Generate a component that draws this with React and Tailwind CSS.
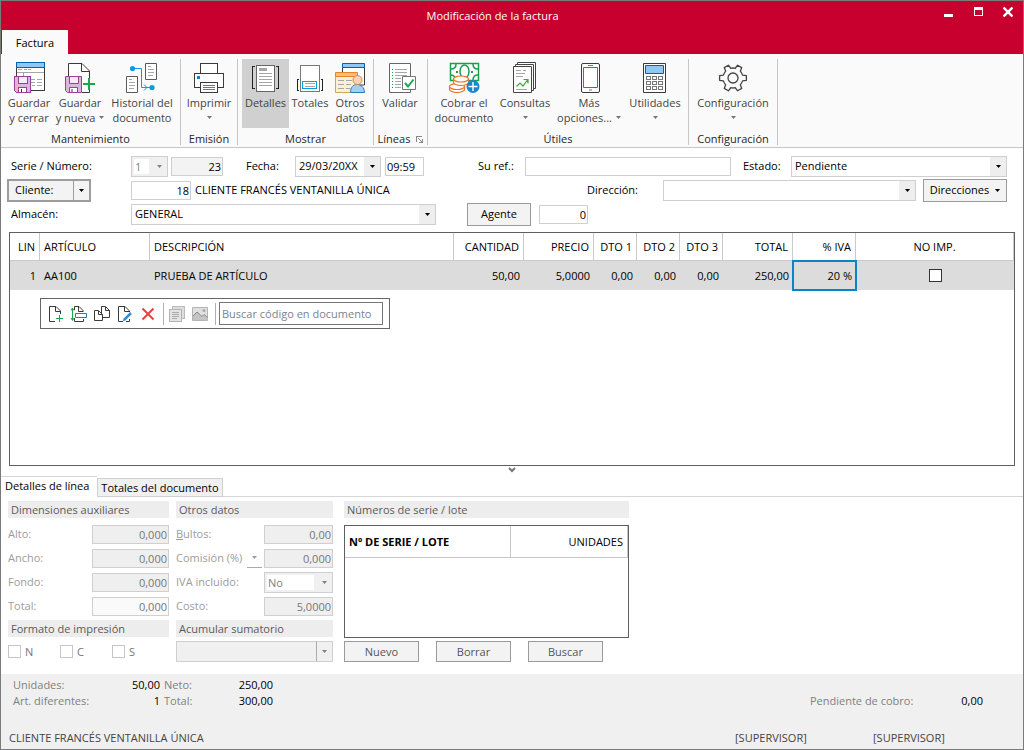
import React, { useState } from 'react';
import { clsx } from 'clsx';

const DARK = '#3a3a38';
const GRAY = '#a6a6a6';
const BLUE = '#0f84cc';

function Caret({ className }) {
  return (
    <svg width="5" height="3" viewBox="0 0 5 3" className={clsx('shrink-0', className)} aria-hidden="true">
      <path d="M0 0h5L2.5 3z" fill="currentColor" />
    </svg>
  );
}

function Icon({ children, size = 32, crisp = true }) {
  return (
    <svg width={size} height={size} viewBox={`0 0 ${size} ${size}`} fill="none" shapeRendering={crisp ? 'crispEdges' : 'auto'} className="shrink-0" aria-hidden="true">
      {children}
    </svg>
  );
}

/* ---------- ribbon icons ---------- */

function Floppy() {
  return (
    <g stroke="#9b3f9b">
      <path d="M1.5 15.5h16v16h-14l-2-2z" fill="#dcb4dc" />
      <path d="M5.5 15.5h9v7h-9z" fill="#f6eaf6" />
      <path d="M5.5 26.5h8v5h-8z" fill="#fff" />
      <path d="M8 28v3" stroke={DARK} />
    </g>
  );
}

function SaveCloseIcon() {
  return (
    <Icon>
      <path d="M3.5 6.5h28v23h-28z" fill="#fff" stroke={DARK} />
      <path d="M3.5 1.5h28v5h-28z" fill="#92c7ef" stroke="#0063b1" />
      <path d="M5 8.5h4M11 8.5h3M15 8.5h3M4 11.5h27M10.5 11v4M17 18.5h5M24 18.5h5M17 21.5h5M24 21.5h5M19 24.5h3M24 24.5h5" stroke={GRAY} />
      <Floppy />
    </Icon>
  );
}

function SaveNewIcon() {
  return (
    <Icon crisp={false}>
      <path d="M4.5 31V2.5H18l8 8v20.5z" fill="#fff" />
      <path d="M4.5 15V2.5H18l7.5 7.5v7M18 31.5h7.5V28M17.5 3v7.5h8" stroke={DARK} />
      <path d="M19 23h12M25 17v12" stroke="#17a84b" strokeWidth="2" />
      <Floppy />
    </Icon>
  );
}

function HistoryIcon() {
  return (
    <Icon crisp={false}>
      <path d="M19.5 2.5h11v16h-11zM.5 15.5h11v16H.5z" fill="#fff" stroke="#5a5a5a" />
      <path d="M22 5.5h3M22 8.5h6M22 11.5h6M22 14.5h5M3 18.5h3M3 21.5h6M3 24.5h6M3 27.5h5" stroke={GRAY} />
      <path d="M7 7.5h8.5v19H24M18 23.5l3 3-3 3" stroke="#0a9be0" />
      <circle cx="6.5" cy="7.5" r="2.6" fill="#0a9be0" />
      <circle cx="26" cy="26.5" r="2.6" fill="#0a9be0" />
    </Icon>
  );
}

function PrinterIcon() {
  return (
    <Icon>
      <path d="M1.5 12.5h29v14h-29z" fill="#fff" stroke={DARK} />
      <path d="M7.5 2.5h17v10h-17zM7.5 21.5h17v10h-17z" fill="#fff" stroke={DARK} />
      <path d="M4 15h3v3H4z" fill={BLUE} />
      <path d="M10 24.5h12M10 26.5h12M10 28.5h12" stroke="#777" />
    </Icon>
  );
}

function DetailsIcon() {
  return (
    <Icon>
      <path d="M6.5 4.5h18v26h-18z" fill="#fff" stroke="#666" />
      <path d="M9 7h8v3H9z" fill={GRAY} />
      <path d="M9 12.5h13M9 15.5h13M9 18.5h13M9 21.5h13M9 24.5h13" stroke={GRAY} />
      <path d="M5 5.5H2.5v22H5M26 5.5h2.5v22H26" stroke="#222" />
    </Icon>
  );
}

function TotalsIcon() {
  return (
    <Icon>
      <path d="M6.5 4.5h19v26h-19z" fill="#fff" stroke="#777" />
      <path d="M8.5 20.5h14v7h-14z" fill="#fff" stroke="#0a9be0" />
      <path d="M11 22.5h10M11 25.5h10" stroke={GRAY} />
      <path d="M5 18.5H3.5v11H5M27 18.5h1.5v11H27" stroke="#222" />
    </Icon>
  );
}

function OtherDataIcon() {
  return (
    <Icon crisp={false}>
      <path d="M8.5 6.5h22V24h-22z" fill="#fff" stroke={DARK} />
      <path d="M8.5 2.5h22v4h-22z" fill="#92c7ef" stroke="#0063b1" />
      <path d="M1.5 15.5h22v16h-22z" fill="#fbf0cf" stroke="#c9a85a" />
      <path d="M1.5 11.5h22v4h-22z" fill="#fdbb7c" stroke="#e8832a" />
      <path d="M4 19.5h6M12 19.5h6M4 23.5h6M12 23.5h5M4 27.5h6M12 27.5h4" stroke={GRAY} />
      <path d="M16.5 31.5c0-5 2.5-8 6.5-8s7.5 3 7.5 8z" fill="#a5cff0" stroke="#2b7ab8" />
      <circle cx="23.5" cy="19" r="4.5" fill="#f9d3b3" stroke="#dd8a4c" />
    </Icon>
  );
}

function ValidateIcon() {
  return (
    <Icon crisp={false}>
      <path d="M5.5 2.5h21v29h-21z" fill="#fff" stroke="#666" />
      <path d="M11 8.5h12M11 11.5h12M11 14.5h12M11 17.5h6M11 20.5h6M11 23.5h6M11 26.5h6" stroke={GRAY} />
      <path d="M8.5 8v1M8.5 14v1M8.5 20v1M8.5 26v1" stroke="#e03030" />
      <path d="M8.5 11v1M8.5 17v1M8.5 23v1" stroke="#17a84b" />
      <path d="M18.5 15.5h13v13h-13z" fill="#fff" stroke="#777" />
      <path d="M21 22l3 3.5 5.5-7" stroke="#17a84b" strokeWidth="2" />
    </Icon>
  );
}

function CashIcon() {
  return (
    <Icon crisp={false}>
      <path d="M2.5 2.5h28v17h-28z" fill="#fff" stroke="#1c9e4e" strokeWidth="1.5" />
      <path d="M3 8c3 0 5-2 5-5M30 8c-3 0-5-2-5-5M30 14c-3 0-5 2-5 5M3 14c2 0 3 1 4 2" stroke="#1c9e4e" strokeWidth="1.5" />
      <ellipse cx="16.5" cy="10.5" rx="4.5" ry="6.5" stroke="#1c9e4e" strokeWidth="1.5" />
      <path d="M8 11h2M23 11h2" stroke="#1c9e4e" strokeWidth="2" />
      <g fill="#fff" stroke="#ea7420" strokeWidth="1.2">
        <path d="M1.5 25.5v3c0 1.5 3.5 3 7.5 3s7.5-1.5 7.5-3v-3z" />
        <ellipse cx="9" cy="25.5" rx="7.5" ry="3" />
        <path d="M5.5 18v3.5c0 1.5 3 3 7.5 3s7.5-1.5 7.5-3V18z" />
        <ellipse cx="13" cy="18" rx="7.5" ry="3" />
      </g>
      <circle cx="25" cy="25.5" r="6.5" fill="#1a86cf" />
      <path d="M20.5 25.5h9M25 21v9" stroke="#fff" strokeWidth="1.4" />
    </Icon>
  );
}

function QueriesIcon() {
  return (
    <Icon crisp={false}>
      <path d="M8.5 1.5h18v26h-18z" fill="#fff" stroke="#444" />
      <path d="M6.5 3.5h18v26h-18z" fill="#fff" stroke="#444" />
      <path d="M4.5 5.5h18v26h-18z" fill="#fff" stroke="#444" />
      <path d="M7 9.5h5M14 9.5h3M7 12.5h9M7 15.5h7M7 28.5h11" stroke={GRAY} />
      <path d="M7.5 25.5l3.5-3.5 3 3 4.5-6M14.5 18.5h4.5v4" stroke="#3aa93a" strokeWidth="1.2" />
    </Icon>
  );
}

function PhoneIcon() {
  return (
    <Icon crisp={false}>
      <rect x="8.5" y="2.5" width="18" height="29" rx="1.5" fill="#fff" stroke={DARK} />
      <path d="M10.5 6.5h14v20h-14z" stroke={BLUE} />
      <path d="M15 4.5h5M16 29h3" stroke="#777" />
    </Icon>
  );
}

function CalculatorIcon() {
  return (
    <Icon crisp={false}>
      <path d="M4.5 2.5h22v29h-22z" fill="#fff" stroke={DARK} />
      <path d="M6.5 4.5h18v8h-18z" fill="#92c7ef" stroke="#0063b1" />
      {[15.5, 20.5, 25.5].map(y =>
        [7.5, 13.5, 19.5].map(x => <rect key={`${x}-${y}`} x={x} y={y} width="4" height="3" stroke="#777" />)
      )}
    </Icon>
  );
}

// six teeth, one every 60 degrees
const gearPoint = (deg, r) => {
  const a = (deg * Math.PI) / 180;
  return `${(16 + r * Math.cos(a)).toFixed(2)} ${(17 + r * Math.sin(a)).toFixed(2)}`;
};
const GEAR = [0, 60, 120, 180, 240, 300]
  .map((a, i) => `${i ? 'L' : 'M'}${gearPoint(a - 17, 10)}L${gearPoint(a - 10, 13.6)}L${gearPoint(a + 10, 13.6)}L${gearPoint(a + 17, 10)}A10 10 0 0 1 ${gearPoint(a + 43, 10)}`)
  .join('') + 'Z';

function GearIcon() {
  return (
    <Icon crisp={false}>
      <path d={GEAR} stroke="#444" strokeWidth="1.3" strokeLinejoin="round" />
      <circle cx="16" cy="17" r="5" stroke="#444" strokeWidth="1.3" />
    </Icon>
  );
}

/* ---------- small icons of the line toolbar ---------- */

function NewLineIcon() {
  return (
    <Icon size={18} crisp={false}>
      <path d="M8 16.5H2.5v-15H9l4.5 4.5v3M8.5 2v4.5h5" stroke={DARK} />
      <path d="M9 13.5h7M12.5 10v7" stroke="#17a84b" />
    </Icon>
  );
}

function InsertLineIcon() {
  return (
    <Icon size={18} crisp={false}>
      <path d="M4.5 5V1.5H9l4.5 4.5M8.5 2v4.5h5M4.5 13v3.5h9V14" stroke={DARK} />
      <path d="M5.5 8.5h11v4h-11z" fill="#fff" stroke={BLUE} />
      <path d="M2.5 3v12M1 5.5L2.5 3 4 5.5M1 13l1.5 2.5L4 13" stroke="#17a84b" />
    </Icon>
  );
}

function CopyIcon() {
  return (
    <Icon size={18} crisp={false}>
      <path d="M8.5 1.5h4l4 4v7h-8zM12.5 2v3.5h4" fill="#fff" stroke={DARK} />
      <path d="M1.5 5.5h4l4 4v6h-8zM5.5 6v3.5h4" fill="#fff" stroke={DARK} />
    </Icon>
  );
}

function EditIcon() {
  return (
    <Icon size={18} crisp={false}>
      <path d="M7 16.5H2.5v-15H9l4.5 4.5v1M8.5 2v4.5h5M13.5 14v2.5H10" stroke={DARK} />
      <path d="M8 15l7-7" stroke="#2f8fd0" strokeWidth="2.5" />
      <path d="M6.5 16.5l1.5-3 1.5 1.5z" fill="#2f8fd0" />
    </Icon>
  );
}

function DeleteIcon() {
  return (
    <Icon size={18} crisp={false}>
      <path d="M3.5 3.5l11 11M14.5 3.5l-11 11" stroke="#ee3f3f" strokeWidth="2" />
    </Icon>
  );
}

function NotesIcon() {
  return (
    <Icon size={18}>
      <path d="M4.5 1.5h12v12h-12z" fill="#ddd" stroke="#bbb" />
      <path d="M1.5 4.5h12v12h-12z" fill="#e4e4e4" stroke="#b4b4b4" />
      <path d="M4 7.5h7M4 9.5h7M4 11.5h7M4 13.5h5" stroke="#aaa" />
    </Icon>
  );
}

function PictureIcon() {
  return (
    <Icon size={18} crisp={false}>
      <path d="M1.5 2.5h15v13h-15z" fill="#e0e0e0" stroke="#b4b4b4" />
      <path d="M2 11l4-4 5 4.5 2-2 3.5 3V15H2z" fill="#c4c4c4" />
      <path d="M2 11l4-4 5 4.5 2-2 3.5 3" stroke="#888" />
      <circle cx="13" cy="5.5" r="1.5" fill="#aaa" />
    </Icon>
  );
}

/* ---------- controls ---------- */

function RibbonButton({ icon, line1, line2, menu, active, className }) {
  return (
    <button className={clsx('h-[69px] pt-0.5 flex flex-col items-center leading-[15px] text-[#444] whitespace-nowrap', active && 'bg-[#d0d0d0]', className)}>
      {icon}
      <span className="mt-0.5">{line1}</span>
      <span className="h-[15px] flex items-center gap-1">
        {line2}
        {menu && <Caret className="text-[#777]" />}
      </span>
    </button>
  );
}

function RibbonGroup({ title, launcher, inset, className, children }) {
  return (
    <section className={clsx('h-[86px] shrink-0 border-r border-[#c6c6c6] flex flex-col', className)}>
      <div className={clsx('flex', inset)}>{children}</div>
      <div className="flex items-center justify-center gap-1.5 leading-4 pt-[3px] text-[#262626]">
        {title}
        {launcher && (
          <button aria-label="Opciones de líneas">
            <svg width="7" height="7" viewBox="0 0 7 7" fill="none" stroke="#888" shapeRendering="crispEdges">
              <path d="M.5 6V.5H6M2.5 2.5l4 4M6.5 3v3.5H3" />
            </svg>
          </button>
        )}
      </div>
    </section>
  );
}

// muted: grey frame with a white text area, as shown for values that are locked
function Select({ id, label, options, muted, empty, className }) {
  const grey = muted || empty;
  return (
    <div className={clsx('relative h-[21px] border border-[#cfcfcf]', grey ? 'bg-[#f0f0f0] text-[#808080]' : 'bg-white text-black', muted && 'p-0.5', className)}>
      <select
        id={id}
        aria-label={label}
        disabled={grey}
        className={clsx('h-full appearance-none outline-none opacity-100 block', muted ? 'w-[calc(100%-16px)] bg-white pl-px' : 'w-full bg-transparent pl-[3px] pr-4')}
      >
        {options.map(o => <option key={o}>{o}</option>)}
      </select>
      <span className={clsx('absolute right-0 inset-y-0 w-4 flex items-center justify-center pointer-events-none', empty ? 'border-l border-[#aaa]' : !muted && 'bg-[#eee]')}>
        <Caret />
      </span>
    </div>
  );
}

function Field({ className, ...props }) {
  return <input className={clsx('h-[19px] min-w-0 border border-[#cfcfcf] px-px outline-none', className)} {...props} />;
}

function PushButton({ className, children }) {
  return (
    <button type="button" className={clsx('border border-[#9a9a9a] bg-[#f3f3f3] flex items-center justify-center', className)}>
      {children}
    </button>
  );
}

function ToolButton({ label, disabled, children }) {
  return <button type="button" aria-label={label} disabled={disabled} className="w-[23px] pl-[3px]">{children}</button>;
}

function SectionTitle({ children, className }) {
  return <h3 className={clsx('h-[17px] leading-[17px] px-[3px] bg-[#ededed] text-[#5a5a5a]', className)}>{children}</h3>;
}

const columns = [
  { name: 'LIN', width: 'w-[30px]', align: 'text-right' },
  { name: 'ARTÍCULO', width: 'w-[110px]', align: 'text-left' },
  { name: 'DESCRIPCIÓN', width: '', align: 'text-left' },
  { name: 'CANTIDAD', width: 'w-[70px]', align: 'text-right' },
  { name: 'PRECIO', width: 'w-[70px]', align: 'text-right' },
  { name: 'DTO 1', width: 'w-[43px]', align: 'text-right' },
  { name: 'DTO 2', width: 'w-[43px]', align: 'text-right' },
  { name: 'DTO 3', width: 'w-[43px]', align: 'text-right' },
  { name: 'TOTAL', width: 'w-[70px]', align: 'text-right' },
  { name: '% IVA', width: 'w-[63px]', align: 'text-right' },
  { name: 'NO IMP.', width: 'w-[158px]', align: 'text-center' },
];

const line = ['1', 'AA100', 'PRUEBA DE ARTÍCULO', '50,00', '5,0000', '0,00', '0,00', '0,00', '250,00', '20 %'];

function LinesTable() {
  const [search, setSearch] = useState('');

  return (
    <div className="mx-2 border border-[#5f5f5f] h-[234px]">
      <table className="w-full table-fixed border-separate border-spacing-0 whitespace-nowrap">
        <thead>
          <tr className="h-7">
            {columns.map(c => (
              <th key={c.name} className={clsx('font-normal border-r border-b border-[#cacaca] px-1 py-0', c.width, c.align)}>{c.name}</th>
            ))}
          </tr>
        </thead>
        <tbody>
          <tr className="h-[29px] bg-[#dcdcdc]">
            {line.map((v, i) => (
              <td key={i} className={clsx('py-0 px-1', columns[i].align, i === 9 && 'outline-2 -outline-offset-1 outline-[#0a84c6]')}>{v}</td>
            ))}
            <td className="p-0 text-center">
              <input type="checkbox" aria-label="No imprimir" className="appearance-none block mx-auto w-[13px] h-[13px] border border-[#333] bg-white" />
            </td>
          </tr>
        </tbody>
      </table>

      <div className="mt-2 ml-[30px] w-[350px] h-[31px] border border-[#666] flex items-center pl-[3px]">
        <ToolButton label="Nueva línea"><NewLineIcon /></ToolButton>
        <ToolButton label="Insertar línea"><InsertLineIcon /></ToolButton>
        <ToolButton label="Duplicar línea"><CopyIcon /></ToolButton>
        <ToolButton label="Modificar línea"><EditIcon /></ToolButton>
        <ToolButton label="Eliminar línea"><DeleteIcon /></ToolButton>
        <span className="w-px h-[22px] bg-[#b0b0b0] ml-1 mr-px" />
        <ToolButton label="Notas" disabled><NotesIcon /></ToolButton>
        <ToolButton label="Imagen" disabled><PictureIcon /></ToolButton>
        <span className="w-px h-[22px] bg-[#b0b0b0] ml-1 mr-[3px]" />
        <input
          className="w-[164px] h-[23px] border border-[#777] px-0.5 outline-none placeholder:text-[#7b8290]"
          placeholder="Buscar código en documento"
          aria-label="Buscar código en documento"
          value={search}
          onChange={e => setSearch(e.target.value)}
        />
      </div>
    </div>
  );
}

const dimensions = [
  { label: 'Alto:', value: '0,000' },
  { label: 'Ancho:', value: '0,000' },
  { label: 'Fondo:', value: '0,000' },
  { label: 'Total:', value: '0,000', light: true },
];

const readOnly = 'text-right text-[#777] bg-[#efefef]';

function LineDetails() {
  return (
    <div className="flex items-start pl-[7px] pt-1 pb-3 text-[#9c9c9c]">
      <div className="w-[161px] mr-[7px]">
        <SectionTitle>Dimensiones auxiliares</SectionTitle>
        <div className="pt-1">
          {dimensions.map(d => (
            <label key={d.label} className="h-6 flex items-center justify-between">
              {d.label}
              <Field defaultValue={d.value} readOnly className={clsx('w-[77px] text-right text-[#777]', d.light ? 'bg-[#fafafa]' : 'bg-[#efefef]')} />
            </label>
          ))}
        </div>
        <SectionTitle className="mt-0.5">Formato de impresión</SectionTitle>
        <div className="flex mt-2 text-[#777]">
          {['N', 'C', 'S'].map(n => (
            <label key={n} className="w-[52px] flex items-center gap-1 leading-[13px]">
              <input type="checkbox" disabled className="appearance-none w-[13px] h-[13px] border border-[#c6c6c6] bg-white" />
              {n}
            </label>
          ))}
        </div>
      </div>

      <div className="w-[157px] mr-[11px]">
        <SectionTitle>Otros datos</SectionTitle>
        <div className="pt-1">
          <label className="h-6 flex items-center justify-between">
            <span><u>B</u>ultos:</span>
            <Field defaultValue="0,00" readOnly className={clsx('w-[69px]', readOnly)} />
          </label>
          <div className="h-6 flex items-center">
            <label htmlFor="comision">Comisión (%)</label>
            <button aria-label="Tipo de comisión" className="w-[15px] h-[19px] ml-auto mr-0.5 border-b border-[#aaa] flex items-center justify-center"><Caret /></button>
            <Field id="comision" defaultValue="0,000" readOnly className={clsx('w-[69px]', readOnly)} />
          </div>
          <div className="h-6 flex items-center justify-between">
            <label htmlFor="iva">IVA incluido:</label>
            <Select id="iva" options={['No', 'Sí']} muted className="w-[69px]" />
          </div>
          <label className="h-6 flex items-center justify-between">
            Costo:
            <Field defaultValue="5,0000" readOnly className={clsx('w-[69px]', readOnly)} />
          </label>
        </div>
        <SectionTitle className="mt-0.5">Acumular sumatorio</SectionTitle>
        <Select label="Acumular sumatorio" options={['']} empty className="mt-1 w-full" />
      </div>

      <div className="w-[285px]">
        <SectionTitle>Números de serie / lote</SectionTitle>
        <div className="mt-[7px] h-[113px] border border-[#5f5f5f] text-black">
          <table className="w-full table-fixed border-separate border-spacing-0">
            <thead>
              <tr className="h-8">
                <th className="w-[166px] px-1 py-0 text-left font-bold border-r border-b border-[#c6c6c6]">Nº DE SERIE / LOTE</th>
                <th className="px-1 py-0 text-right font-normal border-r border-b border-[#c6c6c6]">UNIDADES</th>
              </tr>
            </thead>
          </table>
        </div>
        <div className="flex gap-[17px] mt-[3px] text-[#555]">
          {['Nuevo', 'Borrar', 'Buscar'].map(b => <PushButton key={b} className="w-[75px] h-[21px]">{b}</PushButton>)}
        </div>
      </div>
    </div>
  );
}

export default function App() {
  const [tab, setTab] = useState('lines');

  return (
    <div className="min-h-screen flex flex-col border border-[#7a7a7a] bg-white text-black text-[11px] leading-4 font-['Open_Sans','Noto_Sans',sans-serif]">
      <header className="h-[53px] bg-[#c8002d] flex flex-col justify-between">
        <div className="h-[29px] flex items-center">
          <h1 className="flex-1 pl-10 text-center text-white">Modificación de la factura</h1>
          <div className="flex items-center gap-5 pr-2.5 pb-2 text-white">
            <button aria-label="Minimizar" className="w-[10px] h-[10px] flex items-end"><span className="block w-[9px] h-[3px] bg-white" /></button>
            <button aria-label="Maximizar" className="w-[9px] h-[9px] border border-t-[3px] border-white" />
            <button aria-label="Cerrar">
              <svg width="10" height="10" viewBox="0 0 10 10" stroke="currentColor" strokeWidth="2.4"><path d="M.5.5l9 9M9.5.5l-9 9" /></svg>
            </button>
          </div>
        </div>
        <nav className="flex pl-px">
          <a href="#factura" className="w-[66px] h-6 leading-[25px] text-center bg-[#fafafa]">Factura</a>
        </nav>
      </header>

      <div className="h-[94px] bg-[#fafafa] border-b border-[#c6c6c6] pt-[5px] flex">
        <RibbonGroup title="Mantenimiento" inset="pl-[3px]" className="w-[180px]">
          <RibbonButton icon={<SaveCloseIcon />} line1="Guardar" line2="y cerrar" className="w-[50px]" />
          <RibbonButton icon={<SaveNewIcon />} line1="Guardar" line2="y nueva" menu className="w-[52px]" />
          <RibbonButton icon={<HistoryIcon />} line1="Historial del" line2="documento" className="w-[72px]" />
        </RibbonGroup>
        <RibbonGroup title="Emisión" inset="pl-px" className="w-[57px]">
          <RibbonButton icon={<PrinterIcon />} line1="Imprimir" menu className="w-[54px]" />
        </RibbonGroup>
        <RibbonGroup title="Mostrar" inset="pl-1" className="w-[136px]">
          <RibbonButton icon={<DetailsIcon />} line1="Detalles" active className="w-[47px]" />
          <RibbonButton icon={<TotalsIcon />} line1="Totales" className="w-[42px]" />
          <RibbonButton icon={<OtherDataIcon />} line1="Otros" line2="datos" className="w-[38px]" />
        </RibbonGroup>
        <RibbonGroup title="Líneas" launcher inset="pl-0.5" className="w-[54px]">
          <RibbonButton icon={<ValidateIcon />} line1="Validar" className="w-[48px]" />
        </RibbonGroup>
        <RibbonGroup title="Útiles" inset="pl-0.5" className="w-[261px]">
          <RibbonButton icon={<CashIcon />} line1="Cobrar el" line2="documento" className="w-[68px]" />
          <RibbonButton icon={<QueriesIcon />} line1="Consultas" menu className="w-[54px]" />
          <RibbonButton icon={<PhoneIcon />} line1="Más" line2="opciones..." menu className="w-[74px]" />
          <RibbonButton icon={<CalculatorIcon />} line1="Utilidades" menu className="w-[58px]" />
        </RibbonGroup>
        <RibbonGroup title="Configuración" inset="pl-1" className="w-[89px]">
          <RibbonButton icon={<GearIcon />} line1="Configuración" menu className="w-[80px]" />
        </RibbonGroup>
      </div>

      <form className="pt-1.5 pb-1.5 pr-4">
        <div className="h-6 flex items-center">
          <label htmlFor="serie" className="w-[130px] pl-2.5">Serie / Número:</label>
          <Select id="serie" options={['1']} muted className="w-[37px] mr-[3px]" />
          <Field defaultValue="23" readOnly aria-label="Número" className="w-[52px] mr-[23px] text-right bg-[#f3f3f3]" />
          <label htmlFor="fecha" className="w-[49px]">Fecha:</label>
          <Select id="fecha" options={['29/03/20XX']} className="w-[86px] mr-1" />
          <Field defaultValue="09:59" aria-label="Hora" className="w-[39px] mr-[54px]" />
          <label htmlFor="ref" className="w-[47px]">Su ref.:</label>
          <Field id="ref" className="flex-1 mr-3" />
          <label htmlFor="estado" className="w-12">Estado:</label>
          <Select id="estado" options={['Pendiente', 'Cobrada']} className="w-[216px]" />
        </div>
        <div className="h-6 flex items-center">
          <div className="w-[130px] pl-1.5">
            <div className="w-[84px] h-[23px] flex border-2 border-[#9d9d9d] bg-[#f3f3f3]">
              <button type="button" className="flex-1 text-left pl-1.5">Cliente:</button>
              <button type="button" aria-label="Opciones de cliente" className="w-4 border-l border-[#9d9d9d] flex items-center justify-center"><Caret /></button>
            </div>
          </div>
          <Field defaultValue="18" aria-label="Código de cliente" className="w-[60px] mr-1 text-right" />
          <span className="flex-1">CLIENTE FRANCÉS VENTANILLA ÚNICA</span>
          <label htmlFor="direccion" className="w-[76px]">Dirección:</label>
          <Select id="direccion" options={['']} className="w-[253px] mr-[7px]" />
          <PushButton className="w-[84px] h-[23px] gap-1.5">Direcciones<Caret /></PushButton>
        </div>
        <div className="h-6 flex items-center">
          <label htmlFor="almacen" className="w-[130px] pl-2.5">Almacén:</label>
          <Select id="almacen" options={['GENERAL']} className="w-[305px] mr-[31px]" />
          <PushButton className="w-16 h-[23px] mr-2">Agente</PushButton>
          <Field defaultValue="0" aria-label="Código de agente" className="w-[49px] text-right" />
        </div>
      </form>

      <LinesTable />

      <div className="h-2 flex justify-center items-center">
        <svg width="8" height="6" viewBox="0 0 8 6" fill="none" stroke="#777" strokeWidth="2"><path d="M1 1l3 3 3-3" /></svg>
      </div>

      <div role="tablist" className="h-[23px] flex items-end">
        <button
          role="tab"
          aria-selected={tab === 'lines'}
          onClick={() => setTab('lines')}
          className="w-24 h-[21px] pl-1 pb-0.5 text-left border-t border-[#d6d6d6] whitespace-nowrap"
        >
          Detalles de línea
        </button>
        <button
          role="tab"
          aria-selected={tab === 'totals'}
          onClick={() => setTab('totals')}
          className="w-[126px] h-[19px] bg-[#f0f0f0] border border-[#d0d0d0] whitespace-nowrap"
        >
          Totales del documento
        </button>
        <span className="flex-1 border-b border-[#d6d6d6]" />
      </div>

      <LineDetails />

      <footer className="flex-1 bg-[#f0f0f0] flex flex-col justify-between pt-[3px] pb-[3px]">
        <div className="flex items-end justify-between pr-10">
          <dl className="grid grid-cols-[100px_43px_40px_65px] gap-x-1 pl-3 text-[#808080]">
            <dt>Unidades:</dt>
            <dd className="text-right text-black">50,00</dd>
            <dt>Neto:</dt>
            <dd className="text-right text-black">250,00</dd>
            <dt>Art. diferentes:</dt>
            <dd className="text-right text-black">1</dd>
            <dt>Total:</dt>
            <dd className="text-right text-black">300,00</dd>
          </dl>
          <p className="text-[#808080] flex gap-12">Pendiente de cobro: <span className="text-black">0,00</span></p>
        </div>
        <div className="flex pl-2 text-[#444]">
          <span className="flex-1">CLIENTE FRANCÉS VENTANILLA ÚNICA</span>
          <span className="w-[138px]">[SUPERVISOR]</span>
          <span className="w-[150px]">[SUPERVISOR]</span>
        </div>
      </footer>
    </div>
  );
}
